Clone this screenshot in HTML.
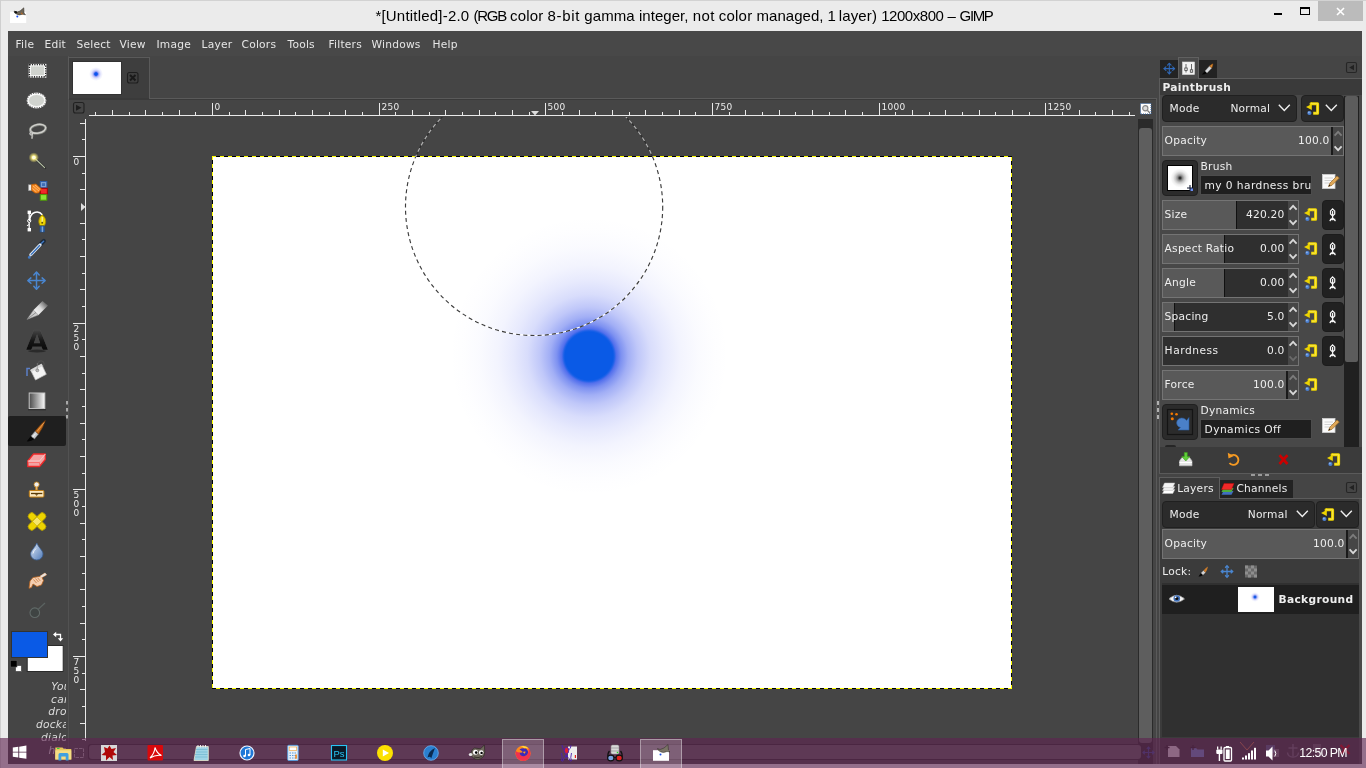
<!DOCTYPE html>
<html lang="en"><head><meta charset="utf-8"><title>GIMP</title>
<style>
*{box-sizing:border-box;margin:0;padding:0}
html,body{width:1366px;height:768px;overflow:hidden;background:#ebebeb}
body{will-change:transform;position:relative;font-family:"DejaVu Sans","Liberation Sans",sans-serif;font-size:12px;color:#eeeeee}
.a{position:absolute}
.t{position:absolute;white-space:nowrap;line-height:1;font-size:10.670px;letter-spacing:.22px}
#title{left:0;top:0;width:1366px;height:31px;background:#ebebeb;border-top:1px solid #d2d2d2;border-left:1px solid #d2d2d2}
#titletext{left:0;top:8px;width:1366px;height:17px;font-family:"Liberation Sans",sans-serif;font-size:15px;line-height:1;color:#000}
.tw{position:absolute;top:0;white-space:nowrap}
#app{left:8px;top:31px;width:1354px;height:733px;background:#454545}
#menubar{left:8px;top:31px;width:1354px;height:25px;background:#484848}
.mi{top:39.600px;margin-left:-0.500px;font-size:10.670px;color:#e6e6e6}
svg{position:absolute;overflow:visible}
.rl{font-size:9px;color:#ececec}

.b{font-weight:bold}
.cb{background:#2b2b2b;border:1px solid #202020;border-radius:4px}
.sl{border:1px solid #747474;background:#2f2f2f}
.en{background:#1f1f1f;border:1px solid #4c4c4c;overflow:hidden;white-space:nowrap;font-size:10.670px;line-height:1;letter-spacing:.4px}
.en span{position:absolute;left:3.600px;top:4.500px}

</style></head><body>
<div class="a" id="title"></div>
<div class="a" style="left:0;top:0;width:1px;height:768px;background:#cfcfcf"></div>
<div class="a" id="titletext"><span class="tw" style="left:375.4px;letter-spacing:0.207px">*[Untitled]-2.0</span> <span class="tw" style="left:473.5px;letter-spacing:-1.275px">(RGB</span> <span class="tw" style="left:510.0px;letter-spacing:0.197px">color</span> <span class="tw" style="left:547.6px;letter-spacing:0.683px">8-bit</span> <span class="tw" style="left:584.3px;letter-spacing:0.094px">gamma</span> <span class="tw" style="left:638.9px;letter-spacing:0.060px">integer,</span> <span class="tw" style="left:692.7px;letter-spacing:0.380px">not</span> <span class="tw" style="left:718.8px;letter-spacing:0.217px">color</span> <span class="tw" style="left:756.5px;letter-spacing:0.035px">managed,</span> <span class="tw" style="left:827.6px;letter-spacing:0.000px">1</span> <span class="tw" style="left:838.8px;letter-spacing:0.131px">layer)</span> <span class="tw" style="left:881.2px;letter-spacing:-0.451px">1200x800</span> <span class="tw" style="left:947.6px;letter-spacing:0.000px">–</span> <span class="tw" style="left:959.6px;letter-spacing:-1.361px">GIMP</span></div>
<div class="a" style="left:1318px;top:1px;width:45px;height:20px;background:#bbbbbb"></div>
<svg style="left:1270px;top:0" width="96" height="31" viewBox="0 0 96 31">
<rect x="4" y="13" width="8" height="2" fill="#000"/>
<rect x="30.5" y="8.5" width="9" height="6" fill="none" stroke="#000" stroke-width="1"/><rect x="30" y="7" width="10" height="2" fill="#000"/>
<path d="M67 8 L74 15 M74 8 L67 15" stroke="#fff" stroke-width="1.6" fill="none"/>
</svg>
<svg style="left:8px;top:6px" width="20" height="18" viewBox="0 0 20 18">
<rect x="2" y="5.800" width="16.200" height="11.200" fill="#fff"/>
<circle cx="9.300" cy="10.400" r="1" fill="#1a50f0"/>
<path d="M6 5 L8.500 6.200 L12 5 L15.800 1.800 L16 7 L17.500 8.800 L14.500 8.200 Q11 9.800 8.500 8 Q6.500 7 6 5 Z" fill="#6e6658" stroke="#2a2620" stroke-width=".5"/>
<circle cx="7.800" cy="6.200" r="1.300" fill="#111"/><path d="M13 6.800 l1.800 1.500" stroke="#d06a10" stroke-width="1"/>
</svg>
<div class="a" id="app"></div>
<div class="a" id="menubar"></div>
<div class="t mi" style="left:16px">File</div>
<div class="t mi" style="left:45px">Edit</div>
<div class="t mi" style="left:77px">Select</div>
<div class="t mi" style="left:120px">View</div>
<div class="t mi" style="left:157px">Image</div>
<div class="t mi" style="left:202px">Layer</div>
<div class="t mi" style="left:242px">Colors</div>
<div class="t mi" style="left:288px">Tools</div>
<div class="t mi" style="left:329px">Filters</div>
<div class="t mi" style="left:372px">Windows</div>
<div class="t mi" style="left:433px">Help</div>
<div class="a" style="left:8px;top:416px;width:58px;height:30px;background:#1f1f1f;border-radius:2px"></div>
<div class="a" style="left:68px;top:56px;width:1px;height:708px;background:#525252"></div>
<svg style="left:0;top:0" width="70" height="680" viewBox="0 0 70 680">
<defs>
<linearGradient id="gGrad" x1="0" x2="1" y1="0" y2="0"><stop offset="0" stop-color="#4a4a4a"/><stop offset="1" stop-color="#fafafa"/></linearGradient>
<radialGradient id="gGlow"><stop offset="0" stop-color="#fffbd0"/><stop offset=".35" stop-color="#f5ea80"/><stop offset="1" stop-color="#e8d860" stop-opacity="0"/></radialGradient>
<linearGradient id="gDrop" x1="0" x2="1" y1="0" y2="1"><stop offset="0" stop-color="#dfe8f4"/><stop offset="1" stop-color="#4f7ab8"/></linearGradient>
<linearGradient id="gA" x1="0" x2="0" y1="0" y2="1"><stop offset="0" stop-color="#5a5a5a"/><stop offset=".5" stop-color="#161616"/><stop offset="1" stop-color="#000"/></linearGradient>
<linearGradient id="gInk" gradientUnits="userSpaceOnUse" x1="35" y1="313" x2="47" y2="302"><stop offset="0" stop-color="#f4f4f4"/><stop offset=".45" stop-color="#ececec" stop-opacity=".9"/><stop offset="1" stop-color="#e0e0e0" stop-opacity=".05"/></linearGradient>
</defs>
<!-- rect select -->
<rect x="29.5" y="64.8" width="16" height="12" fill="#d0d3ce" stroke="#fff" stroke-width="1.8"/>
<rect x="29.5" y="64.8" width="16" height="12" fill="none" stroke="#222" stroke-width="1.8" stroke-dasharray="1.2 1.2"/>
<rect x="30.6" y="65.9" width="13.8" height="9.8" fill="#d0d3ce" stroke="#fff" stroke-width=".8"/>
<!-- ellipse select -->
<ellipse cx="36.5" cy="100.5" rx="9" ry="7" fill="#d0d3ce" stroke="#fff" stroke-width="1.8"/>
<ellipse cx="36.5" cy="100.5" rx="9.4" ry="7.4" fill="none" stroke="#333" stroke-width="1" stroke-dasharray="1.1 1.3"/>
<ellipse cx="36.5" cy="100.5" rx="8" ry="6" fill="#d0d3ce" stroke="#fff" stroke-width=".8"/>
<!-- lasso -->
<g fill="none" stroke-linecap="round">
<ellipse cx="38" cy="129" rx="7.800" ry="4.300" transform="rotate(-10 38 129)" stroke="#7d7f7a" stroke-width="2.800"/>
<ellipse cx="38" cy="128.800" rx="7.800" ry="4.300" transform="rotate(-10 38 128.800)" stroke="#cfcfcb" stroke-width="1.500"/>
<path d="M30.5 131.5 q2.5 2 1.5 6.5" stroke="#b0b0ac" stroke-width="1.8"/>
<circle cx="31.2" cy="133.6" r="1.6" fill="#a8a8a4" stroke="#ddd" stroke-width=".6"/>
</g>
<!-- wand -->
<path d="M34.5 158 L45 168" stroke="#2e2e2e" stroke-width="2.4" stroke-linecap="round"/>
<path d="M34.5 158 L44.6 167.6" stroke="#b9c4a8" stroke-width="1.1" stroke-linecap="round"/>
<circle cx="33.8" cy="157.5" r="5.2" fill="url(#gGlow)"/>
<circle cx="33.8" cy="157.5" r="1.8" fill="#fffde0"/>
<!-- by color select -->
<rect x="40.3" y="181.5" width="6.5" height="6.3" fill="#7aa0d4" stroke="#2f5fa8" stroke-width="1"/>
<rect x="42" y="183.2" width="3" height="2.8" fill="#3d6db5"/>
<rect x="40.3" y="188.3" width="7" height="5.8" fill="#ef2929" stroke="#a40000" stroke-width="1"/>
<rect x="40.3" y="194.6" width="6.5" height="5.6" fill="#8ae234" stroke="#4e9a06" stroke-width="1"/>
<rect x="28.5" y="184.8" width="3.2" height="5.8" fill="#eee" stroke="#999" stroke-width=".5"/>
<path d="M31.7 184.5 L36 184 L41.5 189 L38.5 193 L35 193 L31.7 190.5 Z" fill="#f5871f" stroke="#c45c00" stroke-width=".7"/>
<path d="M33 186 l6 5 M35 185 l5 4.5 M32.5 188.5 l4 3.5" stroke="#ffd9a8" stroke-width=".6"/>
<!-- paths -->
<path d="M29.2 212 V230" stroke="#fff" stroke-width="1.3"/>
<rect x="27.6" y="210.6" width="3.4" height="3.4" fill="#fff"/><rect x="27.6" y="228" width="3.4" height="3.4" fill="#fff"/>
<circle cx="29.2" cy="220.8" r="1.6" fill="#454545" stroke="#fff" stroke-width="1"/>
<path d="M29.5 221 C30 212 38 209.500 42.500 215" stroke="#fff" stroke-width="1.5" fill="none"/>
<path d="M27 226 q1 -2 2.200 -1" stroke="#fff" stroke-width="1" fill="none"/>
<path d="M42.200 214.800 C38.500 218 38 222 40 225.500 H44.500 C46.500 222 46 218 42.200 214.800 Z" fill="#edd400" stroke="#a58a00" stroke-width=".9"/>
<path d="M42.200 217 V223" stroke="#fff8c0" stroke-width="1"/><circle cx="42.200" cy="222.800" r="1" fill="#6b5a00"/>
<rect x="40" y="226" width="4.600" height="6" fill="#3465a4" stroke="#204a87" stroke-width=".6"/>
<path d="M42.300 226.500 V232" stroke="#9cc0ee" stroke-width=".9"/>
<!-- color picker -->
<path d="M43.800 241 L40.500 244.300" stroke="#1c2a3a" stroke-width="4.200" stroke-linecap="round"/>
<path d="M43.600 241.200 L41.500 243.300" stroke="#3f78c4" stroke-width="1.400" stroke-linecap="round"/>
<path d="M40 245 L31 254.500" stroke="#e8eef5" stroke-width="3.200" stroke-linecap="round"/>
<path d="M39.600 245.600 L31 254.800" stroke="#3b74c0" stroke-width="1.500" stroke-linecap="round"/>
<path d="M31 254.500 L29.300 257" stroke="#cfd8e3" stroke-width="1.300"/>
<circle cx="29.300" cy="257.400" r="1.400" fill="#3f78c4"/>
<!-- move -->
<g stroke="#4a86d0" stroke-width="1.500" fill="none" stroke-linejoin="round" stroke-linecap="round">
<path d="M36.500 272.500 V288.700 M28.400 280.600 H44.600"/>
<path d="M33.800 275 L36.500 272 L39.200 275 M33.800 286.200 L36.500 289.200 L39.200 286.200 M30.900 277.900 L27.900 280.600 L30.900 283.300 M42.100 277.900 L45.100 280.600 L42.100 283.300"/>
</g>
<!-- ink -->
<path d="M27 319.400 L33.500 310 L38.500 315 Z" fill="#cfcfcf" stroke="#8a8a8a" stroke-width=".5"/>
<path d="M33.500 310 L42.500 301 L48 305.500 L38.500 315 Z" fill="url(#gInk)"/>
<path d="M27 319.400 L36 312.500" stroke="#666" stroke-width=".6"/>
<!-- text A -->
<ellipse cx="37" cy="351" rx="9" ry="1.400" fill="#2a2a2a"/><text transform="translate(37 350) scale(1.1 1)" x="0" y="0" text-anchor="middle" font-family="DejaVu Sans, sans-serif" font-weight="bold" font-size="26.500" fill="url(#gA)" stroke="#4e4e4e" stroke-width=".45">A</text>
<!-- bucket -->
<path d="M27 376 V368.500 H30" stroke="#5b7fc8" stroke-width="1.500" fill="none"/>
<circle cx="41" cy="364" r="3.200" fill="none" stroke="#555" stroke-width=".8"/>
<path d="M30.500 370 L41.500 364 L46.300 374.300 L35.500 380 Z" fill="#f4f4f4" stroke="#bdbdbd" stroke-width=".7"/>
<path d="M30.500 370 L41.500 364 L42.500 366 L31.500 372 Z" fill="#d8d8d8"/>
<circle cx="37.300" cy="370.300" r="1.500" fill="#bbb" stroke="#777" stroke-width=".6"/>
<path d="M37.300 370 V363" stroke="#888" stroke-width=".6"/>
<!-- gradient -->
<rect x="29.200" y="393" width="15.600" height="15.600" fill="url(#gGrad)" stroke="#c8c8c8" stroke-width="1"/>
<path d="M28 409.700 H46" stroke="#2e2e2e" stroke-width="1.200"/>
<!-- paintbrush -->
<path d="M26.800 441.300 L31 436 L34.500 439 Q30.500 441.800 26.800 441.300 Z" fill="#050505"/>
<path d="M31 436 L35.300 431 L38.500 434 L34.500 439 Z" fill="#c9ccd0" stroke="#777" stroke-width=".5"/>
<path d="M32.500 437.300 l3 -3.600" stroke="#fff" stroke-width=".9"/>
<path d="M35.300 431 Q41 424 45.300 420.500 Q43.500 427 38.500 434 Z" fill="#c26a1a" stroke="#7a3d08" stroke-width=".6"/>
<path d="M37 431.500 Q41 426.500 44.200 422.500" stroke="#f0a860" stroke-width=".8" fill="none"/>
<!-- eraser -->
<path d="M33.500 454 H45.300 V459.500 L39.500 466.500 H27.800 V461 Z" fill="#f3a3a3" stroke="#ef2929" stroke-width="1.300" stroke-linejoin="round"/>
<path d="M27.800 461 H39.500 L45.300 454" fill="none" stroke="#f9c9c9" stroke-width="1"/>
<path d="M28.500 462.500 H39.500 V466" fill="none" stroke="#f66" stroke-width=".8"/>
<!-- stamp -->
<circle cx="36.600" cy="484.500" r="2.600" fill="#eee" stroke="#c17d11" stroke-width=".8"/>
<path d="M35.600 487 V490 H37.600 V487" fill="#e9b96e" stroke="#c17d11" stroke-width=".6"/>
<rect x="29.300" y="490.500" width="14.600" height="6.600" rx="1" fill="#fbe8c0" stroke="#c17d11" stroke-width="1"/>
<path d="M31 493.500 H42.300" stroke="#5a3a05" stroke-width="1.300"/><path d="M35 494.200 l1.600 1.600 l1.600 -1.600 z" fill="#5a3a05"/>
<!-- heal -->
<g stroke="#b39b00" stroke-width=".9" fill="#edd400">
<rect x="26.200" y="518" width="21.600" height="7" rx="3.200" transform="rotate(45 37 521.500)"/>
<rect x="26.200" y="518" width="21.600" height="7" rx="3.200" transform="rotate(-45 37 521.500)"/>
</g>
<rect x="33.800" y="518.300" width="6.400" height="6.400" transform="rotate(-45 37 521.500)" fill="#f6e66a" stroke="#c4aa00" stroke-width=".5"/>
<!-- blur -->
<path d="M36.800 543 C38.500 547.500 43 550.500 43 554 A6.200 6 0 0 1 30.600 554 C30.600 550.500 35.100 547.500 36.800 543 Z" fill="url(#gDrop)" stroke="#3a5f96" stroke-width=".8"/>
<path d="M33 553.500 q.5 -3 3 -5" stroke="#fff" stroke-width="1" fill="none" opacity=".8"/>
<!-- smudge -->
<path d="M45 573 L39.500 576.500 L33 577.500 L30 581 L29 588.300 L31.500 587.500 L33 584 L37 586.500 L41.500 585 L43.500 580.500 L42 577.500 L46.500 575 Z" fill="#f3cdb0" stroke="#b8611b" stroke-width=".8" stroke-linejoin="round"/>
<path d="M42 577.500 L46.800 574.800 L45 572.800 L40 576" fill="#e9e9e9" opacity=".8"/>
<path d="M33.500 579.500 l3 3.500 M35.500 578.500 l3 3.500 M37.800 578 l2.500 3" stroke="#b8611b" stroke-width=".6"/>
<!-- dodge -->
<circle cx="34.800" cy="612.700" r="4.800" fill="#3f4443" stroke="#626b69" stroke-width="1.100"/>
<path d="M38 609.500 L45 603" stroke="#5b6361" stroke-width="1.200"/>
<!-- grip -->
<rect x="66" y="401" width="2" height="3.500" fill="#a8a8a8"/><rect x="66" y="408" width="2" height="3.500" fill="#a8a8a8"/><rect x="66" y="415" width="2" height="3.500" fill="#a8a8a8"/>
<!-- fg/bg -->
<rect x="27.200" y="645.500" width="36" height="26" fill="#fff" stroke="#2a2a2a" stroke-width="1"/>
<rect x="11.500" y="631.500" width="36" height="26" fill="#0a5ae6" stroke="#333" stroke-width="1"/>
<rect x="15.500" y="665.500" width="6" height="6" fill="#fff" stroke="#333" stroke-width=".6"/>
<rect x="10.500" y="660.500" width="6.500" height="6.500" fill="#000" stroke="#555" stroke-width=".6"/>
<path d="M55 634.500 H60.500 V639.500" stroke="#fff" stroke-width="1.300" fill="none"/>
<path d="M56.200 631.800 L53 634.500 L56.200 637.200 Z M57.800 638.200 L60.500 641.500 L63.200 638.200 Z" fill="#fff"/>
</svg>
<div class="a" style="left:8px;top:680.600px;width:58px;height:84px;overflow:hidden">
<div style="position:absolute;left:1px;top:0;width:104px;text-align:center;font-style:italic;font-size:10.670px;letter-spacing:.25px;line-height:12.900px;color:#dcdcdc">You<br>can<br>drop<br>dockable<br>dialogs<br>here</div>
</div>
<div class="a" style="left:68px;top:57px;width:82px;height:42px;background:#3e3e3e;border:1px solid #5a5a5a;border-bottom:none"></div>
<div class="a" style="left:149px;top:98px;width:1008px;height:1px;background:#5a5a5a"></div>
<div class="a" style="left:69px;top:98px;width:1087px;height:2px;background:#3a3a3a"></div>
<div class="a" style="left:149px;top:98px;width:1008px;height:1px;background:#5a5a5a"></div>
<div class="a" style="left:1156px;top:98px;width:1px;height:666px;background:#5a5a5a"></div>
<div class="a" style="left:72px;top:61px;width:50px;height:34px;background:#333"></div>
<div class="a" style="left:73px;top:62px;width:48px;height:32px;background:#fff;overflow:hidden"><div class="a" style="left:15.500px;top:5px;width:14px;height:14px;border-radius:50%;background:radial-gradient(circle closest-side,#0a55ee 0,#0a55ee 20%,rgba(50,80,235,.75) 28%,rgba(70,80,235,.35) 45%,rgba(80,90,240,.12) 70%,rgba(80,90,240,0) 100%)"></div></div>
<svg style="left:126px;top:71px" width="14" height="14" viewBox="0 0 14 14"><rect x="1.500" y="1.500" width="10.500" height="10.500" rx="2" fill="none" stroke="#1e1e1e" stroke-width="1.100"/><path d="M4 4 L9.500 9.500 M9.500 4 L4 9.500" stroke="#1a1a1a" stroke-width="2"/></svg>
<svg style="left:72px;top:101px" width="14" height="14" viewBox="0 0 14 14"><rect x="1.500" y="1.500" width="10.500" height="10.500" rx="2" fill="none" stroke="#222" stroke-width="1.100"/><path d="M4 3.800 L9.500 6.800 L4 9.800 Z" fill="#1e1e1e"/></svg>
<svg style="left:0;top:0" width="1160" height="768" viewBox="0 0 1160 768" shape-rendering="crispEdges"><rect x="89" y="115" width="1046" height="1" fill="#e9e9e9"/><rect x="85" y="119" width="1" height="622" fill="#e9e9e9"/><rect x="95" y="112" width="1" height="3" fill="#e9e9e9"/><rect x="112" y="110" width="1" height="5" fill="#e9e9e9"/><rect x="129" y="112" width="1" height="3" fill="#e9e9e9"/><rect x="145" y="110" width="1" height="5" fill="#e9e9e9"/><rect x="162" y="112" width="1" height="3" fill="#e9e9e9"/><rect x="179" y="110" width="1" height="5" fill="#e9e9e9"/><rect x="195" y="112" width="1" height="3" fill="#e9e9e9"/><rect x="212" y="103" width="1" height="12" fill="#e9e9e9"/><rect x="229" y="112" width="1" height="3" fill="#e9e9e9"/><rect x="245" y="110" width="1" height="5" fill="#e9e9e9"/><rect x="262" y="112" width="1" height="3" fill="#e9e9e9"/><rect x="279" y="110" width="1" height="5" fill="#e9e9e9"/><rect x="295" y="112" width="1" height="3" fill="#e9e9e9"/><rect x="312" y="110" width="1" height="5" fill="#e9e9e9"/><rect x="329" y="112" width="1" height="3" fill="#e9e9e9"/><rect x="345" y="110" width="1" height="5" fill="#e9e9e9"/><rect x="362" y="112" width="1" height="3" fill="#e9e9e9"/><rect x="379" y="103" width="1" height="12" fill="#e9e9e9"/><rect x="395" y="112" width="1" height="3" fill="#e9e9e9"/><rect x="412" y="110" width="1" height="5" fill="#e9e9e9"/><rect x="429" y="112" width="1" height="3" fill="#e9e9e9"/><rect x="445" y="110" width="1" height="5" fill="#e9e9e9"/><rect x="462" y="112" width="1" height="3" fill="#e9e9e9"/><rect x="479" y="110" width="1" height="5" fill="#e9e9e9"/><rect x="495" y="112" width="1" height="3" fill="#e9e9e9"/><rect x="512" y="110" width="1" height="5" fill="#e9e9e9"/><rect x="529" y="112" width="1" height="3" fill="#e9e9e9"/><rect x="545" y="103" width="1" height="12" fill="#e9e9e9"/><rect x="562" y="112" width="1" height="3" fill="#e9e9e9"/><rect x="579" y="110" width="1" height="5" fill="#e9e9e9"/><rect x="595" y="112" width="1" height="3" fill="#e9e9e9"/><rect x="612" y="110" width="1" height="5" fill="#e9e9e9"/><rect x="629" y="112" width="1" height="3" fill="#e9e9e9"/><rect x="645" y="110" width="1" height="5" fill="#e9e9e9"/><rect x="662" y="112" width="1" height="3" fill="#e9e9e9"/><rect x="679" y="110" width="1" height="5" fill="#e9e9e9"/><rect x="695" y="112" width="1" height="3" fill="#e9e9e9"/><rect x="712" y="103" width="1" height="12" fill="#e9e9e9"/><rect x="729" y="112" width="1" height="3" fill="#e9e9e9"/><rect x="745" y="110" width="1" height="5" fill="#e9e9e9"/><rect x="762" y="112" width="1" height="3" fill="#e9e9e9"/><rect x="779" y="110" width="1" height="5" fill="#e9e9e9"/><rect x="795" y="112" width="1" height="3" fill="#e9e9e9"/><rect x="812" y="110" width="1" height="5" fill="#e9e9e9"/><rect x="829" y="112" width="1" height="3" fill="#e9e9e9"/><rect x="845" y="110" width="1" height="5" fill="#e9e9e9"/><rect x="862" y="112" width="1" height="3" fill="#e9e9e9"/><rect x="879" y="103" width="1" height="12" fill="#e9e9e9"/><rect x="895" y="112" width="1" height="3" fill="#e9e9e9"/><rect x="912" y="110" width="1" height="5" fill="#e9e9e9"/><rect x="929" y="112" width="1" height="3" fill="#e9e9e9"/><rect x="945" y="110" width="1" height="5" fill="#e9e9e9"/><rect x="962" y="112" width="1" height="3" fill="#e9e9e9"/><rect x="979" y="110" width="1" height="5" fill="#e9e9e9"/><rect x="995" y="112" width="1" height="3" fill="#e9e9e9"/><rect x="1012" y="110" width="1" height="5" fill="#e9e9e9"/><rect x="1029" y="112" width="1" height="3" fill="#e9e9e9"/><rect x="1045" y="103" width="1" height="12" fill="#e9e9e9"/><rect x="1062" y="112" width="1" height="3" fill="#e9e9e9"/><rect x="1079" y="110" width="1" height="5" fill="#e9e9e9"/><rect x="1095" y="112" width="1" height="3" fill="#e9e9e9"/><rect x="1112" y="110" width="1" height="5" fill="#e9e9e9"/><rect x="1129" y="112" width="1" height="3" fill="#e9e9e9"/><rect x="80" y="123" width="5" height="1" fill="#e9e9e9"/><rect x="82" y="139" width="3" height="1" fill="#e9e9e9"/><rect x="73" y="156" width="12" height="1" fill="#e9e9e9"/><rect x="82" y="173" width="3" height="1" fill="#e9e9e9"/><rect x="80" y="189" width="5" height="1" fill="#e9e9e9"/><rect x="82" y="206" width="3" height="1" fill="#e9e9e9"/><rect x="80" y="223" width="5" height="1" fill="#e9e9e9"/><rect x="82" y="239" width="3" height="1" fill="#e9e9e9"/><rect x="80" y="256" width="5" height="1" fill="#e9e9e9"/><rect x="82" y="273" width="3" height="1" fill="#e9e9e9"/><rect x="80" y="289" width="5" height="1" fill="#e9e9e9"/><rect x="82" y="306" width="3" height="1" fill="#e9e9e9"/><rect x="73" y="323" width="12" height="1" fill="#e9e9e9"/><rect x="82" y="339" width="3" height="1" fill="#e9e9e9"/><rect x="80" y="356" width="5" height="1" fill="#e9e9e9"/><rect x="82" y="373" width="3" height="1" fill="#e9e9e9"/><rect x="80" y="389" width="5" height="1" fill="#e9e9e9"/><rect x="82" y="406" width="3" height="1" fill="#e9e9e9"/><rect x="80" y="423" width="5" height="1" fill="#e9e9e9"/><rect x="82" y="439" width="3" height="1" fill="#e9e9e9"/><rect x="80" y="456" width="5" height="1" fill="#e9e9e9"/><rect x="82" y="473" width="3" height="1" fill="#e9e9e9"/><rect x="73" y="489" width="12" height="1" fill="#e9e9e9"/><rect x="82" y="506" width="3" height="1" fill="#e9e9e9"/><rect x="80" y="523" width="5" height="1" fill="#e9e9e9"/><rect x="82" y="539" width="3" height="1" fill="#e9e9e9"/><rect x="80" y="556" width="5" height="1" fill="#e9e9e9"/><rect x="82" y="573" width="3" height="1" fill="#e9e9e9"/><rect x="80" y="589" width="5" height="1" fill="#e9e9e9"/><rect x="82" y="606" width="3" height="1" fill="#e9e9e9"/><rect x="80" y="623" width="5" height="1" fill="#e9e9e9"/><rect x="82" y="639" width="3" height="1" fill="#e9e9e9"/><rect x="73" y="656" width="12" height="1" fill="#e9e9e9"/><rect x="82" y="673" width="3" height="1" fill="#e9e9e9"/><rect x="80" y="689" width="5" height="1" fill="#e9e9e9"/><rect x="82" y="706" width="3" height="1" fill="#e9e9e9"/><rect x="80" y="723" width="5" height="1" fill="#e9e9e9"/><rect x="82" y="739" width="3" height="1" fill="#e9e9e9"/><path d="M531 111 H539 L535 115.500 Z" fill="#ddd" shape-rendering="auto"/><path d="M81 203 V211 L85.500 207 Z" fill="#ddd" shape-rendering="auto"/></svg>
<div class="t rl" style="left:214.6px;top:103.300px">0</div>
<div class="t rl" style="left:381.6px;top:103.300px">250</div>
<div class="t rl" style="left:547.6px;top:103.300px">500</div>
<div class="t rl" style="left:714.6px;top:103.300px">750</div>
<div class="t rl" style="left:881.6px;top:103.300px">1000</div>
<div class="t rl" style="left:1047.6px;top:103.300px">1250</div>
<div class="t rl" style="left:73.400px;top:158.2px;line-height:8.700px;width:6px;white-space:normal;word-break:break-all">0</div>
<div class="t rl" style="left:73.400px;top:325.2px;line-height:8.700px;width:6px;white-space:normal;word-break:break-all">250</div>
<div class="t rl" style="left:73.400px;top:491.2px;line-height:8.700px;width:6px;white-space:normal;word-break:break-all">500</div>
<div class="t rl" style="left:73.400px;top:658.2px;line-height:8.700px;width:6px;white-space:normal;word-break:break-all">750</div>
<div class="a" id="cv" style="left:86px;top:117px;width:1052px;height:647px;overflow:hidden">
<div class="a" style="left:126px;top:39px;width:800px;height:533px;background:#fff"></div>
<div class="a" style="left:363px;top:98.500px;width:280px;height:280px;border-radius:50%;background:radial-gradient(circle closest-side,#0a5ae6 0,#0a5ae6 17.100%,#1a60e7 18%,rgba(40,76,232,.80) 19.500%,rgba(46,78,232,.62) 23%,rgba(52,80,234,.46) 28%,rgba(58,82,236,.32) 35%,rgba(62,84,238,.20) 44%,rgba(66,86,240,.125) 54%,rgba(70,88,240,.068) 65%,rgba(74,90,240,.029) 78%,rgba(78,90,240,.009) 90%,rgba(80,90,240,0) 100%)"></div>
<div class="a" style="left:126px;top:39px;width:800px;height:1px;background:repeating-linear-gradient(90deg,#ffff00 0,#ffff00 4px,#000 4px,#000 8px)"></div>
<div class="a" style="left:126px;top:571px;width:800px;height:1px;background:repeating-linear-gradient(90deg,#000 0,#000 4px,#ffff00 4px,#ffff00 8px)"></div>
<div class="a" style="left:126px;top:39px;width:1px;height:533px;background:repeating-linear-gradient(180deg,#ffff00 0,#ffff00 4px,#000 4px,#000 8px)"></div>
<div class="a" style="left:925px;top:39px;width:1px;height:533px;background:repeating-linear-gradient(180deg,#000 0,#000 1px,#ffff00 1px,#ffff00 5px,#000 5px,#000 8px)"></div>
<div class="a" style="left:0;top:0;width:1052px;height:40px;overflow:hidden"><svg style="left:0;top:0" width="1052" height="647" viewBox="0 0 1052 647"><circle cx="448.100" cy="89.900" r="128.600" fill="none" stroke="#2e2e2e" stroke-width="1.200"/><circle cx="448.100" cy="89.900" r="128.600" fill="none" stroke="#b2b2b2" stroke-width="1.200" stroke-dasharray="4 3.200"/></svg></div>
<div class="a" style="left:0;top:40px;width:1052px;height:607px;overflow:hidden"><svg style="left:0;top:-40px" width="1052" height="647" viewBox="0 0 1052 647"><circle cx="448.100" cy="89.900" r="128.600" fill="none" stroke="#fff" stroke-width="1.200"/><circle cx="448.100" cy="89.900" r="128.600" fill="none" stroke="#3c3c3c" stroke-width="1.150" stroke-dasharray="4 3.200"/></svg></div>
</div>
<div class="a" style="left:1138px;top:119px;width:15px;height:645px;background:#2a2a2a"></div>
<div class="a" style="left:1139px;top:128px;width:13px;height:615px;background:#5e5e5e;border-radius:3px"></div>
<svg style="left:1140px;top:103px" width="12" height="12" viewBox="0 0 12 12"><rect x=".5" y=".5" width="10.500" height="10.500" fill="#fff" stroke="#3465a4" stroke-width="1" stroke-dasharray="1 1"/><circle cx="5.300" cy="5.300" r="2.600" fill="#ddd" stroke="#888" stroke-width="1.200"/><path d="M7.500 7.500 L10 10" stroke="#777" stroke-width="1.300"/></svg>
<div class="a" style="left:88px;top:744px;width:1054px;height:16px;background:#2a2a2a;border-radius:3px"></div>
<div class="a" style="left:89px;top:745px;width:1052px;height:14px;background:#5e5e5e;border-radius:3px"></div>
<svg style="left:72px;top:746px" width="14" height="14" viewBox="0 0 14 14"><rect x="2.500" y="2.500" width="9" height="9" fill="none" stroke="#bbb" stroke-width="1" stroke-dasharray="3.500 1" opacity=".8"/></svg>
<svg style="left:1142px;top:746px" width="14" height="14" viewBox="0 0 14 14"><g stroke="#3b50a8" stroke-width="1.200" fill="none" opacity=".8"><path d="M6.500 1 V12 M1 6.500 H12"/><path d="M4.800 2.800 L6.500 1 L8.200 2.800 M4.800 10.200 L6.500 12 L8.200 10.200 M2.800 4.800 L1 6.500 L2.800 8.200 M10.200 4.800 L12 6.500 L10.200 8.200"/></g></svg>
<div class="a" style="left:1160px;top:95px;width:202px;height:352px;background:#484848"></div>
<div class="a" style="left:1160px;top:447px;width:202px;height:26px;background:#3b3b3b"></div>
<div class="a" style="left:1160px;top:499px;width:199px;height:265px;background:#3b3b3b"></div>
<div class="a" style="left:1359px;top:499px;width:3px;height:265px;background:#494949"></div>
<div class="a" style="left:1159px;top:78px;width:203px;height:1px;background:#5c5c5c"></div>
<div class="a" style="left:1159px;top:78px;width:1px;height:395px;background:#5c5c5c"></div>
<div class="a" style="left:1160px;top:60px;width:18px;height:18px;background:#232323"></div>
<div class="a" style="left:1198px;top:60px;width:19px;height:18px;background:#232323"></div>
<div class="a" style="left:1178px;top:57px;width:21px;height:22px;background:#4a4a4a;border:1px solid #606060;border-bottom:none"></div>
<svg style="left:1160px;top:57px" width="60" height="22" viewBox="0 0 60 22">
<g stroke="#3069b8" stroke-width="1.150" fill="none" stroke-linecap="round" stroke-linejoin="round" transform="translate(9.300 11.600) scale(.94) translate(-9.300 -11.500)"><path d="M9.300 6 V17 M3.800 11.500 H14.800"/><path d="M7.400 7.900 L9.300 5.800 L11.200 7.900 M7.400 15.100 L9.300 17.200 L11.200 15.100 M5.700 9.600 L3.600 11.500 L5.700 13.400 M12.900 9.600 L15 11.500 L12.900 13.400"/></g>
<rect x="22.500" y="5" width="12" height="12.500" fill="#f2f2f2" stroke="#ddd" stroke-width=".6"/>
<path d="M26 7 V15.500 M31.500 7 V15.500" stroke="#666" stroke-width="1"/><rect x="24.800" y="11" width="2.400" height="2.400" fill="#f2f2f2" stroke="#444" stroke-width=".8"/><rect x="30.300" y="12.800" width="2.400" height="2.400" fill="#f2f2f2" stroke="#444" stroke-width=".8"/>
<path d="M41.800 17.500 L45 14 L47 16 Q44 18 41.800 17.500 Z" fill="#050505"/>
<path d="M45 14 L49.500 9 L51.800 11 L47 16 Z" fill="#d8dadd" stroke="#888" stroke-width=".4"/>
<path d="M49.500 9 Q51.500 7.200 53 6.800 Q52.800 8.800 51.800 11 Z" fill="#d9882e" stroke="#8a4a10" stroke-width=".4"/>
</svg>
<svg style="left:1345px;top:61px" width="14" height="14" viewBox="0 0 14 14"><rect x="1.500" y="1.500" width="10" height="10" rx="1.500" fill="none" stroke="#262626" stroke-width="1.100"/><path d="M9 3.800 L4.200 6.500 L9 9.200 Z" fill="#222"/></svg>
<div class="a" style="left:1160px;top:79px;width:202px;height:16px;background:#3a3a3a"></div>
<div class="t b" style="left:1162.500px;top:82.700px;letter-spacing:.32px">Paintbrush</div>
<div class="a cb" style="left:1162px;top:95px;width:135px;height:27px"></div>
<div class="t" style="left:1169.6px;top:103.7px">Mode</div>
<div class="t" style="left:1230.4px;top:103.7px">Normal</div>
<svg style="left:1278.3px;top:104.3px" width="13" height="8" viewBox="0 0 13 8"><path d="M.8 .8 L6.300 6.500 L11.800 .8" fill="none" stroke="#f0f0f0" stroke-width="1.400"/></svg>
<div class="a cb" style="left:1301px;top:95px;width:43px;height:27px"></div>
<svg style="left:1305.8px;top:101.5px" width="14" height="14" viewBox="0 0 14 14"><path d="M5 1.700 H11.600 V11.200 H7.200" fill="none" stroke="#edd400" stroke-width="3" stroke-linejoin="round"/><circle cx="5" cy="1.700" r="1.500" fill="#edd400"/><path d="M5 1.700 H11.600 V11.200 H7.600" fill="none" stroke="#fce94f" stroke-width=".9" stroke-linejoin="round"/><path d="M0 5.100 L5.800 2 V8 Z" fill="#edd400"/><circle cx="3.400" cy="11" r="2.100" fill="#4a7fd0"/><circle cx="2.900" cy="10.400" r=".9" fill="#8fb4ea"/></svg>
<svg style="left:1324.6px;top:104.3px" width="13" height="8" viewBox="0 0 13 8"><path d="M.8 .8 L6.300 6.500 L11.800 .8" fill="none" stroke="#f0f0f0" stroke-width="1.400"/></svg>
<div class="a" style="left:1344px;top:96px;width:15px;height:351px;background:#202020"></div>
<div class="a" style="left:1345px;top:96px;width:13px;height:266px;background:#5c5c5c;border-radius:2px"></div>
<div class="a sl" style="left:1162px;top:126px;width:182px;height:30px"></div>
<div class="a" style="left:1163px;top:127px;width:169px;height:28px;background:#595959"></div>
<div class="a" style="left:1331px;top:127px;width:2px;height:28px;background:#1a1a1a"></div>
<div class="a" style="left:1333px;top:127px;width:10px;height:28px;background:#464646"></div>
<svg style="left:1333px;top:130px" width="10" height="22" viewBox="0 0 10 22"><path d="M1.600 5.600 L5.100 1.900 L8.600 5.600" fill="none" stroke="#7c7c7c" stroke-width="1.800"/><path d="M1.600 16.400 L5.100 20.100 L8.600 16.400" fill="none" stroke="#d8d8d8" stroke-width="1.800"/></svg>
<div class="t" style="left:1164.6px;top:135.7px">Opacity</div>
<div class="t" style="right:36.5px;top:135.7px">100.0</div>
<div class="a cb" style="left:1162px;top:160px;width:36px;height:36px"></div>
<div class="a" style="left:1167px;top:165px;width:26px;height:26px;border:1px solid #000;background:radial-gradient(circle at 50% 50%,#1a1a1a 0,#333 5%,#8a8a8a 14%,#c4c4c4 26%,#ececec 40%,#fff 56%)"></div>
<svg style="left:1186.500px;top:184.500px" width="6" height="6" viewBox="0 0 6 6"><rect x="3" y="3" width="3" height="3" fill="#6a8cf0"/><path d="M3 0 V6 M0 3 H6" stroke="#101830" stroke-width="1.100"/></svg>
<div class="t" style="left:1200.600px;top:161.800px">Brush</div>
<div class="a en" style="left:1200px;top:175px;width:112px;height:20px"><span>my 0 hardness brush</span></div>
<svg style="left:1321px;top:172.5px" width="20" height="18" viewBox="0 0 20 18"><rect x="1.500" y="1.500" width="12.500" height="14" fill="#fafafa" stroke="#d0d0d0" stroke-width=".8"/><path d="M3.500 5 H12 M3.500 7.500 H12 M3.500 10 H9" stroke="#c8c8c8" stroke-width=".8"/><path d="M7.500 13.500 L9 10 L16 3 L18.300 5 L11 12.300 Z" fill="#e0a858" stroke="#9a6a28" stroke-width=".7"/><path d="M7.500 13.500 L8.300 11.500 L9.500 12.800 Z" fill="#222"/></svg>
<div class="a sl" style="left:1162px;top:200px;width:137px;height:30px"></div>
<div class="a" style="left:1163px;top:201px;width:124px;height:28px;background:#2f2f2f"></div>
<div class="a" style="left:1163px;top:201px;width:73px;height:28px;background:#595959"></div>
<div class="a" style="left:1236px;top:201px;width:1.200px;height:28px;background:#111"></div>
<div class="a" style="left:1288px;top:201px;width:10px;height:28px;background:#464646"></div>
<svg style="left:1288px;top:204px" width="10" height="22" viewBox="0 0 10 22"><path d="M1.600 5.600 L5.100 1.900 L8.600 5.600" fill="none" stroke="#d8d8d8" stroke-width="1.800"/><path d="M1.600 16.400 L5.100 20.100 L8.600 16.400" fill="none" stroke="#d8d8d8" stroke-width="1.800"/></svg>
<div class="t" style="left:1164.6px;top:209.7px">Size</div>
<div class="t" style="right:81.5px;top:209.7px">420.20</div>
<svg style="left:1303.9px;top:207.8px" width="14" height="14" viewBox="0 0 14 14"><path d="M5 1.700 H11.600 V11.200 H7.200" fill="none" stroke="#edd400" stroke-width="3" stroke-linejoin="round"/><circle cx="5" cy="1.700" r="1.500" fill="#edd400"/><path d="M5 1.700 H11.600 V11.200 H7.600" fill="none" stroke="#fce94f" stroke-width=".9" stroke-linejoin="round"/><path d="M0 5.100 L5.800 2 V8 Z" fill="#edd400"/><circle cx="3.400" cy="11" r="2.100" fill="#4a7fd0"/><circle cx="2.900" cy="10.400" r=".9" fill="#8fb4ea"/></svg>
<div class="a cb" style="left:1322px;top:200px;width:22px;height:30px;background:#212121;border-color:#1c1c1c"></div>
<svg style="left:1328px;top:208px" width="10" height="14" viewBox="0 0 10 14"><g fill="none" stroke="#f4f4f4" stroke-width="1.250"><path d="M4.600 .9 L6.700 3 V6 L4.600 8 L2.500 6 V3 Z"/><path d="M4.600 3 V12.300 M1.700 13 L4.600 10 L7.500 13 M1.900 11.400 H7.300" /></g></svg>
<div class="a sl" style="left:1162px;top:234px;width:137px;height:30px"></div>
<div class="a" style="left:1163px;top:235px;width:124px;height:28px;background:#2f2f2f"></div>
<div class="a" style="left:1163px;top:235px;width:61px;height:28px;background:#595959"></div>
<div class="a" style="left:1224px;top:235px;width:1.200px;height:28px;background:#111"></div>
<div class="a" style="left:1288px;top:235px;width:10px;height:28px;background:#464646"></div>
<svg style="left:1288px;top:238px" width="10" height="22" viewBox="0 0 10 22"><path d="M1.600 5.600 L5.100 1.900 L8.600 5.600" fill="none" stroke="#d8d8d8" stroke-width="1.800"/><path d="M1.600 16.400 L5.100 20.100 L8.600 16.400" fill="none" stroke="#d8d8d8" stroke-width="1.800"/></svg>
<div class="t" style="left:1164.6px;top:243.7px">Aspect Ratio</div>
<div class="t" style="right:81.5px;top:243.7px">0.00</div>
<svg style="left:1303.9px;top:241.8px" width="14" height="14" viewBox="0 0 14 14"><path d="M5 1.700 H11.600 V11.200 H7.200" fill="none" stroke="#edd400" stroke-width="3" stroke-linejoin="round"/><circle cx="5" cy="1.700" r="1.500" fill="#edd400"/><path d="M5 1.700 H11.600 V11.200 H7.600" fill="none" stroke="#fce94f" stroke-width=".9" stroke-linejoin="round"/><path d="M0 5.100 L5.800 2 V8 Z" fill="#edd400"/><circle cx="3.400" cy="11" r="2.100" fill="#4a7fd0"/><circle cx="2.900" cy="10.400" r=".9" fill="#8fb4ea"/></svg>
<div class="a cb" style="left:1322px;top:234px;width:22px;height:30px;background:#212121;border-color:#1c1c1c"></div>
<svg style="left:1328px;top:242px" width="10" height="14" viewBox="0 0 10 14"><g fill="none" stroke="#f4f4f4" stroke-width="1.250"><path d="M4.600 .9 L6.700 3 V6 L4.600 8 L2.500 6 V3 Z"/><path d="M4.600 3 V12.300 M1.700 13 L4.600 10 L7.500 13 M1.900 11.400 H7.300" /></g></svg>
<div class="a sl" style="left:1162px;top:268px;width:137px;height:30px"></div>
<div class="a" style="left:1163px;top:269px;width:124px;height:28px;background:#2f2f2f"></div>
<div class="a" style="left:1163px;top:269px;width:61px;height:28px;background:#595959"></div>
<div class="a" style="left:1224px;top:269px;width:1.200px;height:28px;background:#111"></div>
<div class="a" style="left:1288px;top:269px;width:10px;height:28px;background:#464646"></div>
<svg style="left:1288px;top:272px" width="10" height="22" viewBox="0 0 10 22"><path d="M1.600 5.600 L5.100 1.900 L8.600 5.600" fill="none" stroke="#d8d8d8" stroke-width="1.800"/><path d="M1.600 16.400 L5.100 20.100 L8.600 16.400" fill="none" stroke="#d8d8d8" stroke-width="1.800"/></svg>
<div class="t" style="left:1164.6px;top:277.7px">Angle</div>
<div class="t" style="right:81.5px;top:277.7px">0.00</div>
<svg style="left:1303.9px;top:275.8px" width="14" height="14" viewBox="0 0 14 14"><path d="M5 1.700 H11.600 V11.200 H7.200" fill="none" stroke="#edd400" stroke-width="3" stroke-linejoin="round"/><circle cx="5" cy="1.700" r="1.500" fill="#edd400"/><path d="M5 1.700 H11.600 V11.200 H7.600" fill="none" stroke="#fce94f" stroke-width=".9" stroke-linejoin="round"/><path d="M0 5.100 L5.800 2 V8 Z" fill="#edd400"/><circle cx="3.400" cy="11" r="2.100" fill="#4a7fd0"/><circle cx="2.900" cy="10.400" r=".9" fill="#8fb4ea"/></svg>
<div class="a cb" style="left:1322px;top:268px;width:22px;height:30px;background:#212121;border-color:#1c1c1c"></div>
<svg style="left:1328px;top:276px" width="10" height="14" viewBox="0 0 10 14"><g fill="none" stroke="#f4f4f4" stroke-width="1.250"><path d="M4.600 .9 L6.700 3 V6 L4.600 8 L2.500 6 V3 Z"/><path d="M4.600 3 V12.300 M1.700 13 L4.600 10 L7.500 13 M1.900 11.400 H7.300" /></g></svg>
<div class="a sl" style="left:1162px;top:302px;width:137px;height:30px"></div>
<div class="a" style="left:1163px;top:303px;width:124px;height:28px;background:#2f2f2f"></div>
<div class="a" style="left:1163px;top:303px;width:11px;height:28px;background:#595959"></div>
<div class="a" style="left:1174px;top:303px;width:1.200px;height:28px;background:#111"></div>
<div class="a" style="left:1288px;top:303px;width:10px;height:28px;background:#464646"></div>
<svg style="left:1288px;top:306px" width="10" height="22" viewBox="0 0 10 22"><path d="M1.600 5.600 L5.100 1.900 L8.600 5.600" fill="none" stroke="#d8d8d8" stroke-width="1.800"/><path d="M1.600 16.400 L5.100 20.100 L8.600 16.400" fill="none" stroke="#d8d8d8" stroke-width="1.800"/></svg>
<div class="t" style="left:1164.6px;top:311.7px">Spacing</div>
<div class="t" style="right:81.5px;top:311.7px">5.0</div>
<svg style="left:1303.9px;top:309.8px" width="14" height="14" viewBox="0 0 14 14"><path d="M5 1.700 H11.600 V11.200 H7.200" fill="none" stroke="#edd400" stroke-width="3" stroke-linejoin="round"/><circle cx="5" cy="1.700" r="1.500" fill="#edd400"/><path d="M5 1.700 H11.600 V11.200 H7.600" fill="none" stroke="#fce94f" stroke-width=".9" stroke-linejoin="round"/><path d="M0 5.100 L5.800 2 V8 Z" fill="#edd400"/><circle cx="3.400" cy="11" r="2.100" fill="#4a7fd0"/><circle cx="2.900" cy="10.400" r=".9" fill="#8fb4ea"/></svg>
<div class="a cb" style="left:1322px;top:302px;width:22px;height:30px;background:#212121;border-color:#1c1c1c"></div>
<svg style="left:1328px;top:310px" width="10" height="14" viewBox="0 0 10 14"><g fill="none" stroke="#f4f4f4" stroke-width="1.250"><path d="M4.600 .9 L6.700 3 V6 L4.600 8 L2.500 6 V3 Z"/><path d="M4.600 3 V12.300 M1.700 13 L4.600 10 L7.500 13 M1.900 11.400 H7.300" /></g></svg>
<div class="a sl" style="left:1162px;top:336px;width:137px;height:30px"></div>
<div class="a" style="left:1163px;top:337px;width:124px;height:28px;background:#2f2f2f"></div>
<div class="a" style="left:1288px;top:337px;width:10px;height:28px;background:#464646"></div>
<svg style="left:1288px;top:340px" width="10" height="22" viewBox="0 0 10 22"><path d="M1.600 5.600 L5.100 1.900 L8.600 5.600" fill="none" stroke="#d8d8d8" stroke-width="1.800"/><path d="M1.600 16.400 L5.100 20.100 L8.600 16.400" fill="none" stroke="#6a6a6a" stroke-width="1.800"/></svg>
<div class="t" style="left:1164.6px;top:345.7px"><span style="letter-spacing:.52px">Hardness</span></div>
<div class="t" style="right:81.5px;top:345.7px">0.0</div>
<svg style="left:1303.9px;top:343.8px" width="14" height="14" viewBox="0 0 14 14"><path d="M5 1.700 H11.600 V11.200 H7.200" fill="none" stroke="#edd400" stroke-width="3" stroke-linejoin="round"/><circle cx="5" cy="1.700" r="1.500" fill="#edd400"/><path d="M5 1.700 H11.600 V11.200 H7.600" fill="none" stroke="#fce94f" stroke-width=".9" stroke-linejoin="round"/><path d="M0 5.100 L5.800 2 V8 Z" fill="#edd400"/><circle cx="3.400" cy="11" r="2.100" fill="#4a7fd0"/><circle cx="2.900" cy="10.400" r=".9" fill="#8fb4ea"/></svg>
<div class="a cb" style="left:1322px;top:336px;width:22px;height:30px;background:#212121;border-color:#1c1c1c"></div>
<svg style="left:1328px;top:344px" width="10" height="14" viewBox="0 0 10 14"><g fill="none" stroke="#f4f4f4" stroke-width="1.250"><path d="M4.600 .9 L6.700 3 V6 L4.600 8 L2.500 6 V3 Z"/><path d="M4.600 3 V12.300 M1.700 13 L4.600 10 L7.500 13 M1.900 11.400 H7.300" /></g></svg>
<div class="a sl" style="left:1162px;top:370px;width:137px;height:30px"></div>
<div class="a" style="left:1163px;top:371px;width:124px;height:28px;background:#595959"></div>
<div class="a" style="left:1286px;top:371px;width:2px;height:28px;background:#1a1a1a"></div>
<div class="a" style="left:1288px;top:371px;width:10px;height:28px;background:#464646"></div>
<svg style="left:1288px;top:374px" width="10" height="22" viewBox="0 0 10 22"><path d="M1.600 5.600 L5.100 1.900 L8.600 5.600" fill="none" stroke="#7c7c7c" stroke-width="1.800"/><path d="M1.600 16.400 L5.100 20.100 L8.600 16.400" fill="none" stroke="#d8d8d8" stroke-width="1.800"/></svg>
<div class="t" style="left:1164.6px;top:379.7px">Force</div>
<div class="t" style="right:81.5px;top:379.7px">100.0</div>
<svg style="left:1303.9px;top:377.8px" width="14" height="14" viewBox="0 0 14 14"><path d="M5 1.700 H11.600 V11.200 H7.200" fill="none" stroke="#edd400" stroke-width="3" stroke-linejoin="round"/><circle cx="5" cy="1.700" r="1.500" fill="#edd400"/><path d="M5 1.700 H11.600 V11.200 H7.600" fill="none" stroke="#fce94f" stroke-width=".9" stroke-linejoin="round"/><path d="M0 5.100 L5.800 2 V8 Z" fill="#edd400"/><circle cx="3.400" cy="11" r="2.100" fill="#4a7fd0"/><circle cx="2.900" cy="10.400" r=".9" fill="#8fb4ea"/></svg>
<div class="a cb" style="left:1162px;top:404px;width:36px;height:36px"></div>
<svg style="left:1166px;top:408px" width="28" height="28" viewBox="0 0 28 28"><rect x="1.500" y="1.500" width="25" height="25" fill="#2b2b2b" stroke="#141414" stroke-width="1.200"/>
<path d="M23 9.500 V22 H12 L14.500 19.500 C9 18 9.500 10.500 15.500 10 C18.500 10 20 11.500 20.500 12.500 Z" fill="#4a80c8" stroke="#2a5a9f" stroke-width=".6"/>
<circle cx="5.800" cy="5.800" r="1.300" fill="#f57900"/><circle cx="10.500" cy="6.300" r="1.300" fill="#f57900"/><circle cx="6.300" cy="10.800" r="1.500" fill="#f57900"/></svg>
<div class="t" style="left:1200.600px;top:406.200px">Dynamics</div>
<div class="a en" style="left:1200px;top:419px;width:112px;height:20px"><span>Dynamics Off</span></div>
<svg style="left:1321px;top:416.5px" width="20" height="18" viewBox="0 0 20 18"><rect x="1.500" y="1.500" width="12.500" height="14" fill="#fafafa" stroke="#d0d0d0" stroke-width=".8"/><path d="M3.500 5 H12 M3.500 7.500 H12 M3.500 10 H9" stroke="#c8c8c8" stroke-width=".8"/><path d="M7.500 13.500 L9 10 L16 3 L18.300 5 L11 12.300 Z" fill="#e0a858" stroke="#9a6a28" stroke-width=".7"/><path d="M7.500 13.500 L8.300 11.500 L9.500 12.800 Z" fill="#222"/></svg>
<div class="a" style="left:1165px;top:445px;width:11px;height:2px;background:#262626;border-radius:2px 2px 0 0"></div>
<svg style="left:1160px;top:448px" width="200" height="24" viewBox="0 0 200 24">
<path d="M19.500 13 L22 9.500 H29.500 L32 13 V17.800 H19.500 Z" fill="#e6e6e6" stroke="#bdbdbd" stroke-width=".7"/><path d="M19.500 14.500 H32" stroke="#fff" stroke-width="1"/>
<path d="M24.300 4.500 H27.300 V8.500 H29.800 L25.800 13 L21.800 8.500 H24.300 Z" fill="#5fcf3a" stroke="#3a9a1a" stroke-width=".6"/>
<path d="M70 8.200 A5 5 0 1 1 69.500 15" fill="none" stroke="#f59a23" stroke-width="1.900"/><path d="M67.800 4.800 L68.500 10.500 L73.800 8 Z" fill="#f59a23"/>
<path d="M119.500 7.200 L127.500 16 M127.500 7.200 L119.500 16" stroke="#cc0000" stroke-width="2.700"/>
</svg>
<svg style="left:1327.2px;top:452.8px" width="14" height="14" viewBox="0 0 14 14"><path d="M5 1.700 H11.600 V11.200 H7.200" fill="none" stroke="#edd400" stroke-width="3" stroke-linejoin="round"/><circle cx="5" cy="1.700" r="1.500" fill="#edd400"/><path d="M5 1.700 H11.600 V11.200 H7.600" fill="none" stroke="#fce94f" stroke-width=".9" stroke-linejoin="round"/><path d="M0 5.100 L5.800 2 V8 Z" fill="#edd400"/><circle cx="3.400" cy="11" r="2.100" fill="#4a7fd0"/><circle cx="2.900" cy="10.400" r=".9" fill="#8fb4ea"/></svg>
<div class="a" style="left:1159px;top:472.500px;width:203px;height:1px;background:#5a5a5a"></div>
<div class="a" style="left:1251px;top:474px;width:4px;height:2px;background:#9a9a9a"></div><div class="a" style="left:1258px;top:474px;width:4px;height:2px;background:#9a9a9a"></div><div class="a" style="left:1265px;top:474px;width:4px;height:2px;background:#9a9a9a"></div>
<div class="a" style="left:1157px;top:401px;width:2px;height:3.500px;background:#b0b0b0"></div><div class="a" style="left:1157px;top:408px;width:2px;height:3.500px;background:#b0b0b0"></div><div class="a" style="left:1157px;top:415px;width:2px;height:3.500px;background:#b0b0b0"></div>
<div class="a" style="left:1159px;top:498px;width:203px;height:1px;background:#5c5c5c"></div>
<div class="a" style="left:1159px;top:498px;width:1px;height:266px;background:#5c5c5c"></div>
<div class="a" style="left:1159px;top:477px;width:61px;height:22px;background:#3b3b3b;border:1px solid #5e5e5e;border-bottom:none"></div>
<div class="a" style="left:1220px;top:480px;width:73px;height:18px;background:#232323"></div>
<svg style="left:1161px;top:480px" width="76" height="17" viewBox="0 0 76 17">
<g stroke="#bdbdbd" stroke-width=".5"><path d="M1.500 13.500 L3.500 9.500 H13.800 L11.800 13.500 Z" fill="#fff"/><path d="M1.500 10.500 L3.500 6.500 H13.800 L11.800 10.500 Z" fill="#eee"/><path d="M1.500 7.500 L3.500 3 H13.800 L11.800 7.500 Z" fill="#f4f4f4"/></g>
<path d="M60.500 14.800 L62.500 11 H72.500 L70.500 14.800 Z" fill="#3f6fc0"/><path d="M60.500 12 L62.500 8 H72.500 L70.500 12 Z" fill="#4fae3a"/><path d="M60.500 9.500 L63 3.500 H73 L70.500 9.500 Z" fill="#ef2929" stroke="#c00" stroke-width=".4"/>
</svg>
<div class="t" style="left:1177.200px;top:483.500px">Layers</div>
<div class="t" style="left:1236.400px;top:483.500px">Channels</div>
<svg style="left:1345px;top:481px" width="14" height="14" viewBox="0 0 14 14"><rect x="1.500" y="1.500" width="10" height="10" rx="1.500" fill="none" stroke="#262626" stroke-width="1.100"/><path d="M9 3.800 L4.200 6.500 L9 9.200 Z" fill="#222"/></svg>
<div class="a cb" style="left:1162px;top:501px;width:153px;height:27px"></div>
<div class="t" style="left:1169.6px;top:509.7px">Mode</div>
<div class="t" style="left:1247.7px;top:509.7px">Normal</div>
<svg style="left:1295.6px;top:510.3px" width="13" height="8" viewBox="0 0 13 8"><path d="M.8 .8 L6.300 6.500 L11.800 .8" fill="none" stroke="#f0f0f0" stroke-width="1.400"/></svg>
<div class="a cb" style="left:1316px;top:501px;width:43px;height:27px"></div>
<svg style="left:1320.8px;top:507.5px" width="14" height="14" viewBox="0 0 14 14"><path d="M5 1.700 H11.600 V11.200 H7.200" fill="none" stroke="#edd400" stroke-width="3" stroke-linejoin="round"/><circle cx="5" cy="1.700" r="1.500" fill="#edd400"/><path d="M5 1.700 H11.600 V11.200 H7.600" fill="none" stroke="#fce94f" stroke-width=".9" stroke-linejoin="round"/><path d="M0 5.100 L5.800 2 V8 Z" fill="#edd400"/><circle cx="3.400" cy="11" r="2.100" fill="#4a7fd0"/><circle cx="2.900" cy="10.400" r=".9" fill="#8fb4ea"/></svg>
<svg style="left:1339.6px;top:510.3px" width="13" height="8" viewBox="0 0 13 8"><path d="M.8 .8 L6.300 6.500 L11.800 .8" fill="none" stroke="#f0f0f0" stroke-width="1.400"/></svg>
<div class="a sl" style="left:1162px;top:529px;width:197px;height:30px"></div>
<div class="a" style="left:1163px;top:530px;width:184px;height:28px;background:#595959"></div>
<div class="a" style="left:1346px;top:530px;width:2px;height:28px;background:#1a1a1a"></div>
<div class="a" style="left:1348px;top:530px;width:10px;height:28px;background:#464646"></div>
<svg style="left:1348px;top:533px" width="10" height="22" viewBox="0 0 10 22"><path d="M1.600 5.600 L5.100 1.900 L8.600 5.600" fill="none" stroke="#7c7c7c" stroke-width="1.800"/><path d="M1.600 16.400 L5.100 20.100 L8.600 16.400" fill="none" stroke="#d8d8d8" stroke-width="1.800"/></svg>
<div class="t" style="left:1164.6px;top:538.7px">Opacity</div>
<div class="t" style="right:21.5px;top:538.7px">100.0</div>
<div class="t" style="left:1162.300px;top:566.800px">Lock:</div>
<svg style="left:1196px;top:563px" width="64" height="17" viewBox="0 0 64 17">
<path d="M2.500 13.500 L5 10 L7 12 Q4.500 14 2.500 13.500 Z" fill="#050505"/><path d="M5 10 L7.500 7.500 L9.500 9.500 L7 12 Z" fill="#d0d0d0"/><path d="M7.500 7.500 Q10 4.500 12 3.500 Q11.500 6.500 9.500 9.500 Z" fill="#c97a2a"/>
<g stroke="#4a86d0" stroke-width="1.300" fill="none"><path d="M31 3 V14 M25.500 8.500 H36.500"/><path d="M29.200 4.800 L31 2.800 L32.800 4.800 M29.200 12.200 L31 14.200 L32.800 12.200 M27.300 6.700 L25.300 8.500 L27.300 10.300 M34.700 6.700 L36.700 8.500 L34.700 10.300"/></g>
<rect x="49" y="2.500" width="12" height="12" fill="#6a6a6a"/><g fill="#8e8e8e"><rect x="49" y="2.500" width="3" height="3"/><rect x="55" y="2.500" width="3" height="3"/><rect x="52" y="5.500" width="3" height="3"/><rect x="58" y="5.500" width="3" height="3"/><rect x="49" y="8.500" width="3" height="3"/><rect x="55" y="8.500" width="3" height="3"/><rect x="52" y="11.500" width="3" height="3"/><rect x="58" y="11.500" width="3" height="3"/></g>
</svg>
<div class="a" style="left:1162px;top:583px;width:197px;height:154px;background:#303030"></div>
<div class="a" style="left:1162px;top:584.500px;width:196.500px;height:29.500px;background:#1f1f1f"></div>
<div class="a" style="left:1238px;top:587px;width:36px;height:25px;background:#fff;overflow:hidden"><div class="a" style="left:11.900px;top:5px;width:10px;height:10px;border-radius:50%;background:radial-gradient(circle closest-side,#0a5ae6 0,#1a5ee6 22%,rgba(60,80,235,.5) 36%,rgba(70,80,235,.18) 60%,rgba(80,90,240,.05) 80%,rgba(80,90,240,0) 100%)"></div></div>
<svg style="left:1168px;top:592px" width="18" height="14" viewBox="0 0 18 14"><path d="M1 7 Q8.500 -.5 16.500 7 Q8.500 13.500 1 7 Z" fill="#f4f4f4" stroke="#999" stroke-width=".7"/><circle cx="8.800" cy="6.500" r="3.300" fill="#3f6fb8"/><circle cx="8.800" cy="6.500" r="1.600" fill="#0a0a0a"/><circle cx="7.600" cy="5.300" r=".9" fill="#fff"/></svg>
<div class="t b" style="left:1278.500px;top:594.700px;letter-spacing:.32px">Background</div>
<svg style="left:1160px;top:740px" width="200" height="24" viewBox="0 0 200 24">
<g opacity=".9">
<path d="M8 6 H16 L19.500 9.500 V17 H8 Z" fill="#e8e8e8"/><path d="M7 5 V10 M4.500 7.500 H9.500" stroke="#222" stroke-width="1.300"/>
<path d="M31 8 H36 L37.500 9.500 H44 V17 H31 Z" fill="#6f8fd0"/><path d="M33 5 V10 M30.500 7.500 H35.500" stroke="#222" stroke-width="1.300"/>
<rect x="106" y="5" width="9" height="8" fill="#6f8fd0" opacity=".5"/><rect x="110" y="9" width="9" height="8" fill="#ddd" opacity=".35"/>
<path d="M133 4 V16 M128.500 8 H137.500 M127.500 12.500 Q128 17 133 17 Q138 17 138.500 12.500" stroke="#9a9aa8" stroke-width="1.400" fill="none" opacity=".55"/>
<rect x="153" y="4" width="8" height="8" fill="#ddd" opacity=".25"/><rect x="157" y="8" width="9" height="9" fill="#ddd" opacity=".25"/>
<path d="M180.500 5 L189.500 14 M189.500 5 L180.500 14" stroke="#cc0000" stroke-width="2.200"/>
</g>
</svg>
<div class="a" id="tb" style="left:0;top:738px;width:1366px;height:30px;background:rgba(96,36,80,.62)"></div>
<div class="a" style="left:502px;top:739px;width:42px;height:29px;background:rgba(255,255,255,.20);border:1px solid rgba(255,255,255,.38);border-bottom:none"></div>
<div class="a" style="left:640px;top:739px;width:42px;height:29px;background:rgba(255,255,255,.20);border:1px solid rgba(255,255,255,.38);border-bottom:none"></div>
<svg style="left:0;top:738px" width="1366" height="30" viewBox="0 0 1366 30">
<!-- windows logo -->
<path d="M12.800 9.600 L18.300 8.800 V13.700 H12.800 Z M19.200 8.650 L26.400 7.600 V13.700 H19.200 Z M12.800 14.600 H18.300 V19.500 L12.800 18.700 Z M19.200 14.600 H26.400 V20.700 L19.200 19.650 Z" fill="#fff"/>
<!-- explorer -->
<path d="M55.300 9.500 H62.500 L64 11 H71.300 V21.500 H55.300 Z" fill="#e8c75a"/><path d="M55.300 12.300 H71.300 V21.500 H55.300 Z" fill="#f5dd84"/>
<path d="M58.500 22.500 V16.500 Q58.500 15 60 15 H67 Q68.500 15 68.500 16.500 V22.500 H65.700 V18.500 H61.300 V22.500 Z" fill="#3fa0e0"/><rect x="57" y="10" width="2.500" height="1" fill="#2ecc40"/>
<!-- red splat -->
<rect x="101" y="7" width="16" height="16" fill="#d8d8d8"/><path d="M104 9 L107.500 10.500 L109.500 7.500 L111.500 11 L116 10 L113.500 14 L117 17 L112.500 17.500 L113 22 L109.500 19 L106 22.500 L106 17.500 L101.500 17 L105 14 Z" fill="#b00808"/>
<!-- adobe -->
<rect x="147.500" y="7" width="15.500" height="15.500" rx="1" fill="#d8090c"/><path d="M150 20 Q154.500 15.500 155 9.500 Q157 15.500 161.500 17.500 Q155.500 16.500 150 20 Z" fill="none" stroke="#fff" stroke-width="1.100"/>
<!-- notepad -->
<path d="M196.500 8.500 H208.300 V22.500 H194 Z" fill="#9fd4e6" stroke="#e8e8d0" stroke-width=".8"/><path d="M196 11.500 H207.500 M195.500 14 H207.500 M195 16.500 H207.500 M195 19 H207.500" stroke="#6fb6cf" stroke-width=".7"/><path d="M198 7 V9.500 M200.500 7 V9.500 M203 7 V9.500 M205.500 7 V9.500" stroke="#eee" stroke-width="1"/>
<!-- itunes -->
<circle cx="247" cy="15" r="7" fill="#1e78d8" stroke="#eef4ff" stroke-width="1.200"/><path d="M245.500 18 V11.500 L250 10.500 V17" stroke="#fff" stroke-width="1" fill="none"/><circle cx="244.500" cy="18" r="1.300" fill="#fff"/><circle cx="249" cy="17" r="1.300" fill="#fff"/>
<!-- calc -->
<rect x="287.700" y="7.300" width="10.500" height="15.200" rx="1" fill="#e6f0fa" stroke="#5a9ad8" stroke-width="1"/><rect x="289.200" y="9" width="7.500" height="3.300" fill="#fff" stroke="#f0a030" stroke-width=".6"/><path d="M289.500 15 H296.500 M289.500 17.500 H296.500 M289.500 20 H296.500" stroke="#5a9ad8" stroke-width="1.200" stroke-dasharray="1.500 1"/><rect x="295.300" y="16.500" width="1.500" height="4.200" fill="#f08010"/>
<!-- ps -->
<rect x="331.500" y="7.500" width="15" height="14.500" fill="#0a1a28" stroke="#29c5f6" stroke-width="1.100"/>
<text x="339" y="18.800" text-anchor="middle" font-family="Liberation Sans, sans-serif" font-size="9.500" fill="#29c5f6">Ps</text>
<!-- yellow play -->
<circle cx="385" cy="15" r="8" fill="#fce100"/><path d="M382.800 11.500 L389 15 L382.800 18.500 Z" fill="#fff"/>
<!-- blue globe -->
<circle cx="431" cy="15" r="7.300" fill="#2a7fd0" stroke="#6ab0f0" stroke-width=".8"/><path d="M427.500 19.500 Q428.500 13 435 10 Q433 15 431.200 20.500 Q430.500 17.500 427.500 19.500 Z" fill="#0a2a50"/>
<!-- gimp -->
<path d="M470.800 15.500 Q471.500 11 474.500 10 L480.500 10.800 L484.300 7 L484.800 14 Q484.300 20.500 478 21.500 Q471.500 21 470.800 15.500 Z" fill="#6e685c" stroke="#2e2a24" stroke-width=".7"/>
<circle cx="475.500" cy="14.300" r="2.500" fill="#fff"/><circle cx="481.200" cy="14.600" r="2.300" fill="#fff"/><circle cx="476.200" cy="14.600" r="1.300" fill="#000"/><circle cx="481.600" cy="14.900" r="1.200" fill="#000"/><ellipse cx="470.600" cy="16.600" rx="1.800" ry="1.500" fill="#e8e8e8"/><path d="M474 19 Q478 20.500 482 18.500" stroke="#2a2620" stroke-width=".8" fill="none"/>
<!-- firefox -->
<circle cx="523" cy="15.300" r="7.600" fill="#ff8a1a"/>
<path d="M515.600 13 Q514.800 20 520.500 22.500 Q528 24.500 530.400 17.500 Q531.200 12.500 528 9 Q529.800 14.500 526 17.800 Q521 19 519.800 14.500 Q517.500 14.500 515.600 13 Z" fill="#f0314f"/>
<path d="M519.500 11.500 Q522 9.500 525.500 10.500 Q528.500 12 528 15 Q526.500 18.500 523 18.300 Q519.500 17.500 519.800 14.500 Q521.500 15 522.800 14 Q521.800 12.500 519.500 11.500 Z" fill="#3b2ab8"/>
<path d="M520.500 8.300 Q526 6.800 529 10.800 Q526.500 9.500 524 10.300 Q523.500 8.800 520.500 8.300 Z" fill="#ffd83a"/>
<path d="M522.800 14 Q524.500 13 525.800 13.800 L524.500 15.800 Z" fill="#ff9a1f"/>
<!-- spider -->
<rect x="568" y="8.500" width="9" height="13" fill="#eee"/><rect x="574.800" y="17" width="1.200" height="3" fill="#e02020"/><ellipse cx="566.500" cy="12.500" rx="2.200" ry="3.200" fill="#e02030" stroke="#4a20b0" stroke-width=".9"/><circle cx="566.500" cy="18" r="1.600" fill="#4a20b0"/><path d="M562 7 Q562 11 564.500 12 M571 7 Q571 11 568.500 12 M561.500 15 Q563 20 561.500 23 M571.500 15 Q570 20 571.500 23 M564.500 19.500 L562.500 23.500 M568.500 19.500 L570.500 23.500" stroke="#4a20b0" stroke-width=".9" fill="none"/>
<!-- glasses -->
<rect x="611" y="7" width="8" height="9" rx="1.500" fill="#d8d8d8" stroke="#888" stroke-width=".5"/><path d="M611 10 H619 M611 13 H619" stroke="#888" stroke-width=".6"/><circle cx="617.500" cy="14.500" r=".8" fill="#20d020"/>
<path d="M609.500 13 Q607.500 15 608 19" stroke="#111" stroke-width="1.300" fill="none"/><path d="M620.500 13 Q622.500 15 622 19" stroke="#111" stroke-width="1.300" fill="none"/>
<ellipse cx="610.800" cy="20" rx="3.200" ry="2.800" fill="#7aa0e0" stroke="#111" stroke-width="1.200"/><ellipse cx="619.200" cy="20" rx="3.200" ry="2.800" fill="#e02020" stroke="#111" stroke-width="1.200"/><path d="M614 19.500 H616" stroke="#111" stroke-width="1.200"/>
<!-- gimp active -->
<rect x="653" y="12.200" width="16" height="10.600" fill="#fff"/><circle cx="660.500" cy="16.600" r="1" fill="#1a50e8"/>
<path d="M657.500 10.500 L660 11.500 L664 10 L668 6.500 L668.500 12.500 L670 14 L667 13.500 Q663 15.500 660 13.500 Q658 12.500 657.500 10.500 Z" fill="#7a7466" stroke="#2e2a24" stroke-width=".5"/>
<!-- tray -->
<g fill="#fff" stroke="none">
<rect x="1217" y="8.500" width="1.300" height="3"/><rect x="1220.500" y="8.500" width="1.300" height="3"/><rect x="1216.300" y="11.500" width="6.200" height="4.500" rx="1"/><rect x="1218.700" y="16" width="1.400" height="7"/>
<rect x="1226" y="8" width="3" height="1.500"/><rect x="1224" y="9.500" width="7.500" height="13.500" rx="1" fill="none" stroke="#fff" stroke-width="1.300"/><rect x="1225.800" y="11.500" width="3.900" height="9.500"/>
<rect x="1242" y="19.500" width="2" height="2"/><rect x="1245" y="17.500" width="2" height="4"/><rect x="1248" y="15.200" width="2" height="6.300"/><rect x="1251" y="12.500" width="2" height="9"/><rect x="1254" y="9.800" width="2" height="11.700"/>
<path d="M1266 12.500 H1268.500 L1272.500 8.500 V22.500 L1268.500 18.500 H1266 Z"/>
</g>
<path d="M1274.800 12.500 Q1276.800 15.500 1274.800 18.500" stroke="#fff" stroke-width="1" fill="none"/>
<path d="M1240 4 L1247 12 L1254 4" stroke="#a05050" stroke-width="1" fill="none" opacity=".7"/>
</svg>
<div class="t" style="left:1299.300px;top:747.200px;font-family:'Liberation Sans',sans-serif;font-size:12.300px;color:#fff;letter-spacing:-.62px">12:50 PM</div>

</body></html>
